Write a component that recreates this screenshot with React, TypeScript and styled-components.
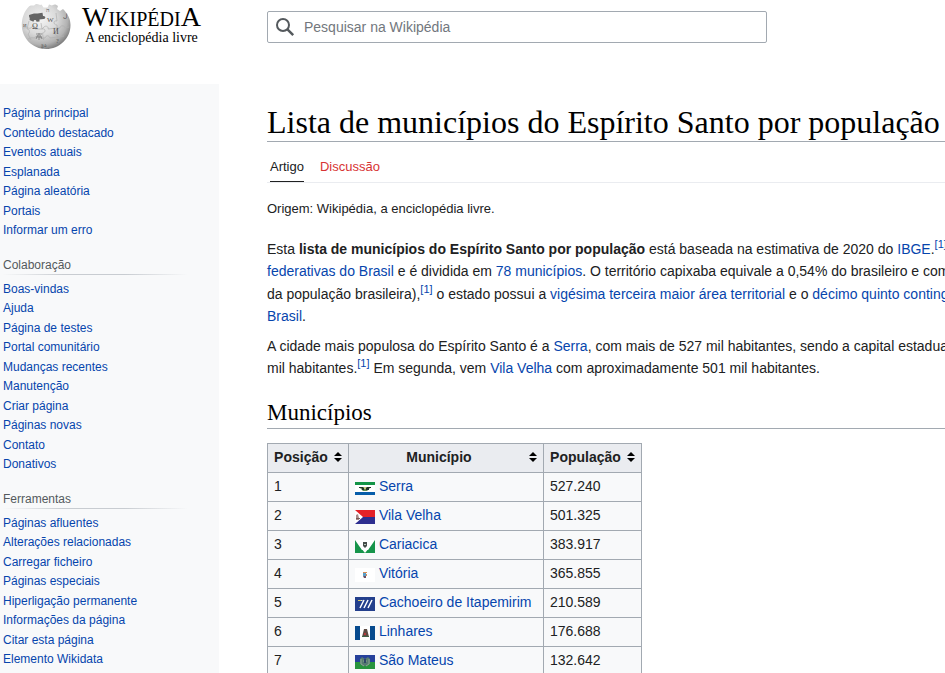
import React from "react";
import styled, { createGlobalStyle } from "styled-components";

const GlobalStyle = createGlobalStyle`
  * { box-sizing: border-box; }
  body {
    margin: 0;
    background: #fff;
    color: #202122;
    font-family: "Liberation Sans", Arial, sans-serif;
    font-size: 14px;
    overflow: hidden;
  }
  a { color: #0645ad; text-decoration: none; }
  a:hover { text-decoration: underline; }
`;

const Page = styled.div`
  display: grid;
  grid-template-columns: 219px minmax(0, 1fr);
  grid-template-rows: 84px auto;
  min-height: 100vh;
`;

const LogoLink = styled.a`
  && { color: #000; text-decoration: none; }
  display: flex;
  align-items: flex-start;
  padding-left: 21px;
  gap: 11px;
`;

const LogoText = styled.span`
  display: flex;
  flex-direction: column;
  align-items: center;
  padding-top: 3px;
  font-family: "Liberation Serif", "Times New Roman", serif;
  white-space: nowrap;
`;

const Wordmark = styled.span`
  font-size: 28px;
  line-height: 28px;
  font-variant: small-caps;
`;

const Tagline = styled.span`
  font-size: 14px;
  line-height: 14px;
`;

const SearchForm = styled.form`
  padding: 11px 16px 0 48px;
`;

const SearchBox = styled.label`
  display: flex;
  align-items: center;
  gap: 9px;
  max-width: 500px;
  height: 32px;
  padding: 0 7px;
  border: 1px solid #a2a9b1;
  border-radius: 2px;
`;

const SearchInput = styled.input`
  flex: 1;
  min-width: 0;
  border: 0;
  padding: 0;
  outline: 0;
  background: transparent;
  font: inherit;
  color: #202122;
  &::placeholder { color: #72777d; opacity: 1; }
`;

const Sidebar = styled.nav`
  background: #f8f9fa;
  padding: 20px 32px 0 3px;
  font-size: 12px;
`;

const NavHeading = styled.h3`
  margin: 16px 0 5px;
  padding-bottom: 1px;
  border-bottom: 1px solid;
  border-image: linear-gradient(to right, rgba(200, 204, 209, 0), #c8ccd1 33%, #c8ccd1 66%, rgba(200, 204, 209, 0)) 1;
  font-size: 12px;
  font-weight: 400;
  line-height: 16px;
  color: #54595d;
`;

const NavList = styled.ul`
  margin: 0;
  padding: 0;
  list-style: none;
  line-height: 1.625;
`;

const Content = styled.main`
  padding: 20px 0 0 48px;
  min-width: 0;
  overflow: hidden;
`;

const Title = styled.h1`
  margin: 0;
  border-bottom: 1px solid #a2a9b1;
  font-family: Georgia, "Liberation Serif", serif;
  font-size: 32px;
  font-weight: 400;
  line-height: 37px;
  color: #000;
  white-space: nowrap;
`;

const Tabs = styled.nav`
  display: flex;
  gap: 16px;
  padding-left: 3px;
  border-bottom: 1px solid #eaecf0;
  font-size: 13px;
`;

const Tab = styled.a<{ $active?: boolean; $missing?: boolean }>`
  && { color: ${(p) => (p.$missing ? "#d73333" : "#202122")}; }
  padding: 17px 0 6px;
  line-height: 16px;
  border-bottom: 1px solid ${(p) => (p.$active ? "#202122" : "transparent")};
`;

const Tabline = styled.div`
  margin: 18px 0 21px;
  font-size: 13px;
  line-height: 16px;
`;

const Paragraph = styled.p`
  margin: 0 0 7px;
  line-height: 1.6;
  white-space: nowrap;
`;

const Line = styled.span`
  display: block;
`;

const Reference = styled.sup`
  font-size: 11px;
  line-height: 1;
`;

const SectionTitle = styled.h2`
  margin: 20px 0 14px;
  padding-bottom: 2px;
  border-bottom: 1px solid #a2a9b1;
  font-family: Georgia, "Liberation Serif", serif;
  font-size: 23px;
  font-weight: 400;
  line-height: 27px;
  color: #000;
`;

const DataTable = styled.table`
  min-width: 375px;
  border-collapse: collapse;
  border: 1px solid #a2a9b1;
  background: #f8f9fa;
  line-height: 22px;
  white-space: nowrap;
`;

const HeadCell = styled.th`
  padding: 0;
  border: 1px solid #a2a9b1;
  background: #eaecf0;
`;

const SortButton = styled.button`
  display: flex;
  align-items: center;
  width: 100%;
  gap: 6px;
  padding: 2px 6px 4px;
  border: 0;
  background: transparent;
  color: inherit;
  font: inherit;
  line-height: 22px;
  cursor: pointer;
`;

const SortLabel = styled.span`
  flex: 1;
  text-align: center;
`;

const Cell = styled.td`
  padding: 2px 11px 4px 6px;
  border: 1px solid #a2a9b1;
`;

const City = styled.span`
  display: flex;
  align-items: center;
  gap: 4px;
`;

const FlagSvg = styled.svg`
  flex: none;
  margin-top: 4px;
`;

const Globe = () => (
  <svg width="50" height="50" viewBox="0 0 50 50" aria-hidden="true">
    <defs>
      <radialGradient id="globe" cx="38%" cy="34%" r="68%">
        <stop offset="0" stopColor="#f4f4f4" />
        <stop offset=".5" stopColor="#dadada" />
        <stop offset=".82" stopColor="#b2b2b2" />
        <stop offset="1" stopColor="#808080" />
      </radialGradient>
    </defs>
    <path
      d="M8 6.500c2-2 3.500-.5 5-1 1.500-.8 1-2 3-1.500 2 .5 3 1.500 4.500.5l2 3 4 0 1.500-3c2 .5 2.500 1.500 4 .5s3.500-.5 5 1l-1 3 3 2 3-2C46 13 49.500 18 49.500 25c0 13.500-11 24-24.500 24S.8 38 .8 25C.8 17.500 3.500 11 8 6.500z"
      fill="url(#globe)"
    />
    <path
      d="M8 15l5-1.500h3.500l5-.8.5 3.300c3-.5 3 3 .5 3l-4 .5v2l-3 .3c0-2.500-3-2.500-3 0L8.500 20c1-2-1-3-.5-5z"
      fill="#656565"
    />
    <path
      d="M20 23l1 6c4-1 4 4 .5 4l1 7M35 13l1 8c-4-1-4 4 0 4l.5 7c-3 0-3 4 .5 4l-1 6M8 21L6 29c3 0 3 4 1 5l3 6M2 28c5-1 6 1 8 0 1-3 5-2 4 1l7 0 2-2c2-2 5 0 4 2l9-1 3 0c0-3 5-3 5 0l4-1M7 39c4-2 5-1 7-1 0-3 5-3 5 0h5c1-3 4-3 5 0l8-1 6-1"
      fill="none"
      stroke="#b0b0b0"
      strokeWidth=".7"
    />
    <g fontFamily="Liberation Serif, serif" fill="#505050">
      <text x="11" y="29" fontSize="8">Ω</text>
      <text x="26" y="22" fontSize="7">W</text>
      <text x="32" y="34" fontSize="8">И</text>
      <text x="25" y="12" fontSize="6">ה</text>
      <text x="42" y="18" fontSize="6">ل</text>
      <text x="2" y="27" fontSize="5">И</text>
      <text x="35" y="43" fontSize="6">?</text>
      <text x="20" y="47" fontSize="5">ვა</text>
    </g>
    <path d="M15 34h6M18 33v7M15 37h6M15 39l2-4m2 0l2 4" stroke="#707070" strokeWidth=".7" fill="none" />
  </svg>
);

const SearchIcon = () => (
  <svg width="20" height="20" viewBox="0 0 20 20" fill="none" stroke="#54595d" aria-hidden="true">
    <circle cx="8" cy="8" r="6" strokeWidth="2" />
    <path d="M12.200 12.200l6 6" strokeWidth="2.500" />
  </svg>
);

const SortIcon = () => (
  <svg width="8" height="10" viewBox="0 0 8 10" aria-hidden="true">
    <path d="M0 4l4-4 4 4zM0 6l4 4 4-4z" fill="#000" />
  </svg>
);

const flags: Record<string, React.ReactNode> = {
  serra: (
    <>
      <path fill="#fff" d="M0 0h20v13H0z" />
      <path fill="#149447" d="M0 0h20v3H0z" />
      <path fill="#075eaa" d="M0 10h20v3H0z" />
      <path fill="#648b52" d="M4 5h12l-2 2-2 2H8L6 7z" />
      <path fill="#25302a" d="M4 5h4v1H4zm8 0h4v1h-4zM7 6h2v2H7zm4 0h3v2h-3z" />
      <path fill="#c9c27a" d="M9 5h2v2H9z" />
    </>
  ),
  vila: (
    <>
      <path fill="#e42128" d="M0 0h20v7H0z" />
      <path fill="#2d2e8f" d="M0 7h20v7H0z" />
      <path fill="#fff" d="M0 0l8 7-8 7z" />
      <path fill="#a98888" d="M1 5l2-1 1 4v2H1z" />
      <path fill="#765b55" d="M1 8h4v1H1z" />
    </>
  ),
  cariacica: (
    <>
      <path fill="#fff" d="M0 0h20v13H0z" />
      <path fill="#16944a" d="M0 0l9 13H0zM20 0l-9 13h9z" />
      <path fill="#16944a" d="M7 10h6v3H7z" />
      <path fill="#fff" d="M6 8h8l-4 5z" />
      <path fill="#464e4a" d="M8 2h4v4l-2 2-2-2z" />
      <path fill="#bac7bd" d="M9 4h2v1H9z" />
    </>
  ),
  vitoria: (
    <>
      <path fill="#fff" d="M0 0h20v14H0z" />
      <path fill="#599dc7" d="M8 5h3v3H8z" />
      <path fill="#d88c55" d="M8 4h4v1H8zm3 2h1v2h-1z" />
      <path fill="#6c5064" d="M8 8h3v2H9z" />
    </>
  ),
  cachoeiro: (
    <>
      <path fill="#233f8c" d="M0 0h20v14H0z" />
      <path fill="#e4e6ed" d="M3 3h5L7 4H3z" />
      <path stroke="#fff" strokeWidth="1.500" d="M5 11l4-8M9 11l4-8M13 11l4-8" />
      <path fill="#d6cb68" d="M3 3h3v1H3z" />
    </>
  ),
  linhares: (
    <>
      <path fill="#fff" d="M0 0h20v14H0z" />
      <path fill="#064a8e" d="M0 0h5v14H0zm15 0h5v14h-5z" />
      <path fill="#5c4b43" d="M9 3h3l1 4 1 4H7l1-4z" />
      <path fill="#b23b3b" d="M9 7h2v2H9z" />
      <path fill="#416246" d="M7 10h7v1H7z" />
    </>
  ),
  mateus: (
    <>
      <path fill="#26419b" d="M0 0h20v7H0z" />
      <path fill="#28943e" d="M0 7h20v7H0z" />
      <path fill="#557a70" d="M5 4l2-2 3 2 3-2 2 2v5l-4 2H8L5 9z" />
      <path stroke="#8ba790" fill="none" d="M6 4v5l3 2m5-7v5l-3 2M8 6h4" />
      <path fill="#304767" d="M9 4h2v4H9z" />
    </>
  ),
};

const Flag = ({ name }: { name: string }) => {
  const height = name === "serra" || name === "cariacica" ? 13 : 14;
  return (
    <FlagSvg width="20" height={height} viewBox={`0 0 20 ${height}`} aria-hidden="true">
      {flags[name]}
    </FlagSvg>
  );
};

const navGroups = [
  {
    title: "",
    items: ["Página principal", "Conteúdo destacado", "Eventos atuais", "Esplanada", "Página aleatória", "Portais", "Informar um erro"],
  },
  {
    title: "Colaboração",
    items: ["Boas-vindas", "Ajuda", "Página de testes", "Portal comunitário", "Mudanças recentes", "Manutenção", "Criar página", "Páginas novas", "Contato", "Donativos"],
  },
  {
    title: "Ferramentas",
    items: ["Páginas afluentes", "Alterações relacionadas", "Carregar ficheiro", "Páginas especiais", "Hiperligação permanente", "Informações da página", "Citar esta página", "Elemento Wikidata"],
  },
];

const cities = [
  { flag: "serra", name: "Serra", population: "527.240" },
  { flag: "vila", name: "Vila Velha", population: "501.325" },
  { flag: "cariacica", name: "Cariacica", population: "383.917" },
  { flag: "vitoria", name: "Vitória", population: "365.855" },
  { flag: "cachoeiro", name: "Cachoeiro de Itapemirim", population: "210.589" },
  { flag: "linhares", name: "Linhares", population: "176.688" },
  { flag: "mateus", name: "São Mateus", population: "132.642" },
];

const Ref = () => (
  <Reference>
    <a href="#ref1">[1]</a>
  </Reference>
);

export default function App() {
  return (
    <>
      <GlobalStyle />
      <Page>
        <LogoLink href="#inicio">
          <Globe />
          <LogoText>
            <Wordmark>WikipédiA</Wordmark>
            <Tagline>A enciclopédia livre</Tagline>
          </LogoText>
        </LogoLink>
        <SearchForm role="search">
          <SearchBox>
            <SearchIcon />
            <SearchInput type="search" placeholder="Pesquisar na Wikipédia" aria-label="Pesquisar na Wikipédia" />
          </SearchBox>
        </SearchForm>
        <Sidebar>
          {navGroups.map((group) => (
            <React.Fragment key={group.title}>
              {group.title && <NavHeading>{group.title}</NavHeading>}
              <NavList>
                {group.items.map((item) => (
                  <li key={item}>
                    <a href="#nav">{item}</a>
                  </li>
                ))}
              </NavList>
            </React.Fragment>
          ))}
        </Sidebar>
        <Content>
          <Title>Lista de municípios do Espírito Santo por população</Title>
          <Tabs>
            <Tab href="#artigo" $active>Artigo</Tab>
            <Tab href="#discussao" $missing>Discussão</Tab>
          </Tabs>
          <Tabline>Origem: Wikipédia, a enciclopédia livre.</Tabline>
          <Paragraph>
            <Line>
              Esta <b>lista de municípios do Espírito Santo por população</b> está baseada na estimativa de 2020 do{" "}
              <a href="#ibge">IBGE</a>.<Ref />
            </Line>
            <Line>
              <a href="#unidades">federativas do Brasil</a> e é dividida em <a href="#municipios">78 municípios</a>. O
              território capixaba equivale a 0,54% do brasileiro e com
            </Line>
            <Line>
              da população brasileira),<Ref /> o estado possui a{" "}
              <a href="#area">vigésima terceira maior área territorial</a> e o{" "}
              <a href="#contingente">décimo quinto contingente</a>
            </Line>
            <Line>
              <a href="#brasil">Brasil</a>.
            </Line>
          </Paragraph>
          <Paragraph>
            <Line>
              A cidade mais populosa do Espírito Santo é a <a href="#serra">Serra</a>, com mais de 527 mil habitantes,
              sendo a capital estadual
            </Line>
            <Line>
              mil habitantes.<Ref /> Em segunda, vem <a href="#vilavelha">Vila Velha</a> com aproximadamente 501 mil
              habitantes.
            </Line>
          </Paragraph>
          <SectionTitle>Municípios</SectionTitle>
          <DataTable>
            <thead>
              <tr>
                {["Posição", "Município", "População"].map((label) => (
                  <HeadCell key={label} scope="col">
                    <SortButton type="button">
                      <SortLabel>{label}</SortLabel>
                      <SortIcon />
                    </SortButton>
                  </HeadCell>
                ))}
              </tr>
            </thead>
            <tbody>
              {cities.map((city, index) => (
                <tr key={city.name}>
                  <Cell>{index + 1}</Cell>
                  <Cell>
                    <City>
                      <Flag name={city.flag} />
                      <a href="#cidade">{city.name}</a>
                    </City>
                  </Cell>
                  <Cell>{city.population}</Cell>
                </tr>
              ))}
            </tbody>
          </DataTable>
        </Content>
      </Page>
    </>
  );
}
